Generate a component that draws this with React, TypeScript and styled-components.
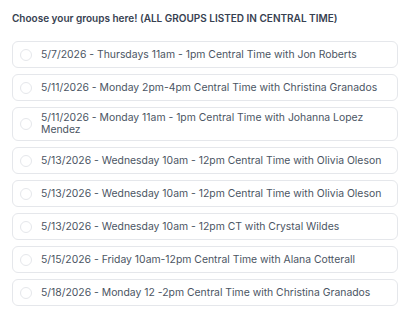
import { styled, createGlobalStyle } from 'styled-components'

const GlobalStyle = createGlobalStyle`
  body {
    margin: 0;
    background: #fff;
    font-family: Inter, 'Noto Sans', sans-serif;
  }
`

const groups = [
  '5/7/2026 - Thursdays 11am - 1pm Central Time with Jon Roberts',
  '5/11/2026 - Monday 2pm-4pm Central Time with Christina Granados',
  '5/11/2026 - Monday 11am - 1pm Central Time with Johanna Lopez Mendez',
  '5/13/2026 - Wednesday 10am - 12pm Central Time with Olivia Oleson',
  '5/13/2026 - Wednesday 10am - 12pm Central Time with Olivia Oleson',
  '5/13/2026 - Wednesday 10am - 12pm CT with Crystal Wildes',
  '5/15/2026 - Friday 10am-12pm Central Time with Alana Cotterall',
  '5/18/2026 - Monday 12 -2pm Central Time with Christina Granados',
]

export default function App() {
  return (
    <>
      <GlobalStyle />
      <Container>
        <Title>Choose your groups here! (ALL GROUPS LISTED IN CENTRAL TIME)</Title>
        <List>
          {groups.map((label, i) => (
            <Option key={i}>
              <Radio type="radio" name="group" />
              <Label>{label}</Label>
            </Option>
          ))}
        </List>
      </Container>
    </>
  )
}

const Container = styled.div`
  padding: 11px 15px 0 12px;
`

const Title = styled.div`
  font-size: 10px;
  font-weight: 600;
  line-height: 14px;
  color: #374151;
  margin-bottom: 16px;
`

const List = styled.div`
  display: flex;
  flex-direction: column;
  gap: 6px;
`

const Option = styled.label`
  display: flex;
  align-items: center;
  gap: 9px;
  padding: 4px 10px 4px 7px;
  min-height: 27px;
  box-sizing: border-box;
  border: 1px solid #e5e7eb;
  border-radius: 6px;
  background: #fff;
  cursor: pointer;
`

const Radio = styled.input`
  appearance: none;
  flex: none;
  margin: 0;
  width: 12px;
  height: 12px;
  border: 1px solid #e5e7eb;
  border-radius: 50%;
  background: #fff;
`

const Label = styled.span`
  font-size: 10.4px;
  line-height: 12px;
  color: #4b5563;
`
